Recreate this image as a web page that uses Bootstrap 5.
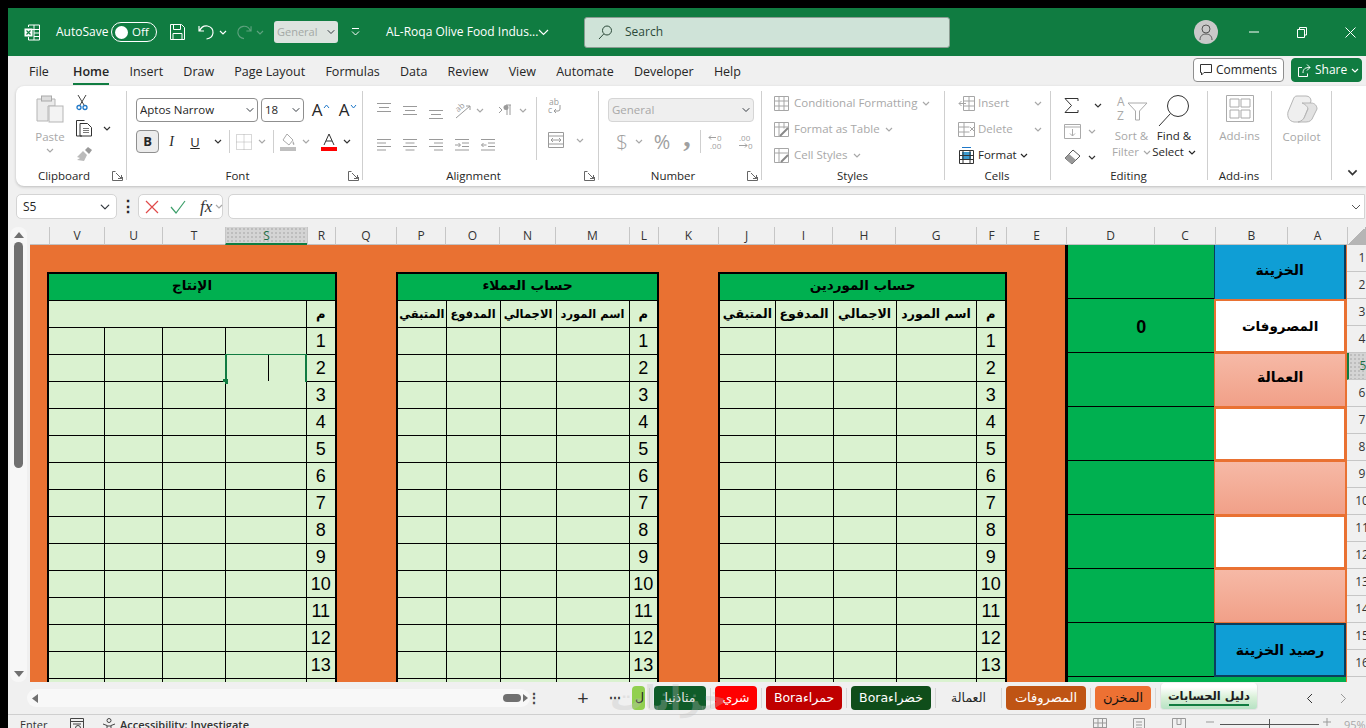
<!DOCTYPE html>
<html lang="en">
<head>
<meta charset="utf-8">
<title>AL-Roqa Olive Food Industries</title>
<link href="https://cdn.jsdelivr.net/npm/bootstrap@5.3.0/dist/css/bootstrap.min.css" rel="stylesheet">
<style>
html,body{height:100%;overflow:hidden}
body{margin:0;background:#000;font-family:"Open Sans","Liberation Sans",sans-serif;font-size:12px;color:#262626;line-height:16px}
.xapp{margin:8px 0 0 8px;height:720px;background:#f0f0f0;display:flex;flex-direction:column;overflow:hidden;position:relative}
svg{display:block;flex:none;overflow:visible}
.cv{width:8px;height:5px}
.dis{color:#a8a8a8}
/* title bar */
.xtitle{height:48px;background:#107c41;color:#fff;flex:none}
.xtitle select.form-select{width:64px;height:22px;padding:0 14px 0 3px;font-size:11px;color:#a3a8a5;background-color:#dde3df;border:0;border-radius:3px;background-size:8px;background-position:right 3px center;margin-left:10px}
.xtoggle{width:46px;height:20px;border:1px solid #fff;border-radius:10px;padding-left:3px;gap:4px;font-size:11.5px;margin-left:7px}
.xknob{width:13px;height:13px;border-radius:50%;background:#fff}
.xsearch{width:366px;height:31px;margin-left:35px;background:#cfe3d8;border:1px solid #8b9c92;border-radius:3px;color:#2d4a3a;padding-left:13px;gap:13px;font-size:12px}
.xavatar{width:24px;height:24px;border-radius:50%;background:#c9c9c9;margin-left:244px}
.xts1{margin-left:16px}.xts2{margin-left:16px;width:48px}.xts3{margin-left:13px}.xts4{margin-left:13px}.xts5{margin-left:4px}.xts6{margin-left:9px}.xts7{margin-left:4px}.xts8{margin-left:13px}.xts9{margin-left:26px;width:147px;font-size:12px;white-space:nowrap}.xts10{margin-left:5px}.xts11{margin-left:31px}.xts12{margin-left:38px}.xts13{margin-left:38px}
/* ribbon tabs */
.xtabs{height:28px;flex:none;padding-left:11px;position:relative}
.xtabs .nav-link{padding:0 10.1px;line-height:31px;height:28px;color:#262626;font-size:12.5px;border:0;position:relative}
.xtabs .nav-item:first-child{margin-right:4px}
.xtabs .nav-link.active{font-weight:600}
.xtabs .nav-link.active::after{content:"";position:absolute;left:10px;right:10px;bottom:-1px;height:2px;background:#107c41}
.xbtnc,.xbtns{height:24px;padding:0 6px;font-size:12px;line-height:20px;border-radius:4px;display:flex;align-items:center;gap:4px}
.xbtnc{width:91px;background:#fff;border:1px solid #8f8f8f;color:#262626;margin-left:auto}
.xbtns{width:71px;background:#107c41;border:1px solid #107c41;color:#fff;margin-left:7px;margin-right:4px}
/* ribbon */
.xribbon{height:100px;flex:none;margin:2px 0 0 8px;background:#fff;border-radius:8px 0 0 8px;box-shadow:0 1px 3px rgba(0,0,0,.22);padding-top:5px}
.rg{height:89px;flex:none;border-right:1px solid #cfcfcf}
.rgb{height:77px}
.rgbt{padding-top:7px}
.rgl{height:16px;display:flex;align-items:center;padding-right:1px;color:#262626;font-size:11.5px}
.rgl span{flex:1;text-align:center}
.rgl svg{width:13px;height:10px}
.w111{width:111px}.w236{width:236px}.w163{width:163px}.w183{width:183px}.w106{width:106px}.w157{width:157px}.w64{width:64px}.w60{width:60px}
.xlabel{font-size:11.5px;line-height:16px;white-space:nowrap}
.xpaste{margin-left:19px;width:30px;padding-top:4px}
.xpaste .xlabel{margin-top:6px}
.xpaste .cv{margin-top:3px}
.xclip2{margin-left:11px;padding-top:3px;gap:9px}
.rsel.form-select{height:24px;font-size:11.5px;padding:0 14px 0 3px;border:1px solid #8f8f8f;border-radius:4px;color:#262626;background-size:8px;background-position:right 3px center}
.s122{width:122px}.s43{width:43px;margin-left:3px}
.xbig{font-size:17px;line-height:20px;width:12px;text-align:center}
.xgrow{margin-left:7px}.xshrink{margin-left:8px}
.xcaret{margin-top:-8px}
.xfr2{margin-top:8px;height:23px}
.xfr1{padding-left:9px}
.xfr2{padding-left:9px}
.xb{width:23px;height:23px;background:#ececec;border:1px solid #8f8f8f;border-radius:4px;font-weight:700;font-size:13px;line-height:21px;text-align:center;padding:0}
.xi{margin-left:6px;width:13px;font-style:italic;text-align:center;font-size:14px;font-family:"Liberation Serif",serif}
.xu{margin-left:9px;width:16px;text-align:center;font-size:13px;text-decoration:underline}
.xvs{width:1px;height:23px;background:#cfcfcf}
.m3{margin-left:3px}.m6{margin-left:6px}.m7{margin-left:7px}.m8{margin-left:8px}.m11{margin-left:11px}.m12{margin-left:12px}.m14{margin-left:14px}.m4{margin-left:4px}.m5{margin-left:5px}.m10{margin-left:10px}.m13{margin-left:13px}.m17{margin-left:17px}.m9{margin-left:9px}.m16{margin-left:16px}.m22{margin-left:22px}.m20{margin-left:20px}
.xal{padding:6px 0 0 14px}
.xal1{width:160px;height:63px;border-right:1px solid #cfcfcf}
.xal1r{height:26px}
.xal1r+.xal1r{margin-top:9px}
.xal2{padding-left:11px;gap:15px}
.rsel.xns{width:146px;background-color:#efefef;border-color:#d5d5d5;color:#a8a8a8;margin-left:9px}
.xnr2{margin-top:8px;height:23px;padding-left:17px}
.xdollar{font-size:21px;width:9px;text-align:center;color:#a0a0a0;font-weight:300}
.xpct{font-size:20px;width:22px;text-align:center;color:#a0a0a0}
.xcom{font-size:30px;font-weight:700;width:10px;text-align:center;color:#a0a0a0;line-height:18px;font-family:"Liberation Serif",serif;margin-top:-12px}
.xst{padding-left:12px;font-size:11.5px;white-space:nowrap;margin-top:-1px;height:78px}
.xst>div{height:26px;gap:5px}
.xinkw{width:50px}
.xced{padding-left:13px}
.xced>div{gap:3px}
.xinkw{margin-right:3px}
.xed1{width:46px;padding-top:1px}
.xed1>div{height:26px;gap:7px}
.xed2{width:43px;text-align:center;padding-top:4px}
.xed3{width:42px;text-align:center;padding-top:4px}
.xed2 .xlabel:first-of-type{margin-top:7px}
.xed3 .xlabel:first-of-type{margin-top:1px}
.xcen{text-align:center;padding-top:4px}
.xcen svg{margin:0 auto}
.xcen .xlabel{margin-top:6px}
.xcoll{flex:1;padding:78px 0 0 15px}
.xcoll .cv{width:11px;height:7px}
/* formula */
.xform{height:26px;flex:none;margin:8px 0 0 8px}
.xname.form-select{width:101px;height:25px;border:1px solid #d4d4d4;border-radius:5px;padding:0 0 0 6px;font-size:12px;background-size:10px;background-position:right 6px center;color:#262626}
.xdots{width:21px;text-align:center;font-weight:700;line-height:14px;font-size:16px;padding-top:5px}
.xfb{width:85px;height:25px;background:#fff;border:1px solid #d4d4d4;border-radius:5px;padding-left:6px}
.xfx{font-family:"Liberation Serif",serif;font-style:italic;font-size:17px;margin-left:14px;color:#333}
.xinput.form-control{height:25px;margin-left:5px;flex:1;border:1px solid #d4d4d4;border-radius:5px 0 0 5px;padding:0}
.xendcv{margin-left:-14px;margin-right:5px;margin-top:10px;color:#555}
/* sheet */
.xsheetw{height:455px;margin-top:7px;flex:none;position:relative}
.xvs-bar{width:22px;flex:none;padding:0 3px 0 2px}
.xvtrack{background:#f7f7f7;border-radius:8px;height:100%;align-items:center;padding:5px 0}
.xvthumb{width:9px;height:226px;background:#707070;border-radius:5px;margin-top:4px;margin-bottom:auto}
.xmain{flex:1;overflow:hidden}
.xcols{display:grid;grid-template-columns:19px 55px 58px 63px 82px 28px 61px 49px 54px 56px 74px 29px 60px 56px 58px 63px 81px 30px 60px 88px 61px 72px 60px 19px;height:18px;font-size:12px;color:#333;line-height:18px;text-align:center;border-bottom:1px solid #c2c2c2}
.xcols>div{border-left:1px solid #c6c6c6;overflow:hidden}
.xcols>div:first-child{border-left:0}
.xcols .xsel{background:#d4d4d4 radial-gradient(#bdbdbd 1px,transparent 1px) 0 0/4px 4px;color:#1f6f47;border-bottom:2px solid #107c41;height:18px}
.xcorner{background:linear-gradient(135deg,transparent 50%,#b5b5b5 50%)}
.xbody{height:437px;overflow:hidden}
.xorange{width:1317px;height:437px;background:#e97132;overflow:hidden;padding:27px 0 0 17px;flex:none}
.xrows{width:19px;overflow:hidden;flex:none}
.xrows div{width:30px;height:27px;line-height:26px;text-align:center;border-bottom:1px solid #c6c6c6;font-size:12px;color:#333}
.xrows .xrsel{background:#d4d4d4 radial-gradient(#bdbdbd 1px,transparent 1px) 0 0/4px 4px;color:#1f6f47;border-left:2px solid #107c41}
.table.xtb{--bs-table-bg:#daf2d0;--bs-table-color:#000;--bs-border-color:#000;table-layout:fixed;margin:0;border-collapse:collapse;border:2px solid #000;flex:none;color:#000}
.xtb td,.xtb th{padding:0;height:27px;border:1px solid #000;text-align:center;vertical-align:middle;font-family:"Liberation Sans",sans-serif;font-size:18px;line-height:20px;font-weight:400;position:relative}
.xtb .xar{font-family:"DejaVu Sans",sans-serif;font-weight:700;font-size:11.5px;white-space:nowrap;overflow:hidden}
.t3 .xar{font-size:12.5px}
.xtb .xttl{background:#00b050;--bs-table-bg:#00b050;font-size:13.5px;padding-bottom:3px}
.xtb td.xtm{font-family:"DejaVu Sans",sans-serif;font-weight:700;font-size:13px}
.t1{width:288px}.t2{width:261px;margin-left:59px!important}.t3{width:287px;margin-left:59px!important}
.c29{width:29px}.c30{width:30px}.c49{width:49px}.c54{width:54px}.c56{width:56px}.c58{width:58px}.c63{width:63px}.c73{width:73px}.c80{width:80px}.c81{width:81px}
.xcellsel{position:absolute;left:-1px;right:-1px;top:-1px;height:28px;border:2px solid #107c41;border-top-width:1px;border-bottom:0}
.xcaretbar{position:absolute;left:41px;top:0;width:1px;height:26px;background:#000}
.xhandle{position:absolute;left:-4px;top:24px;width:5px;height:5px;background:#107c41}
.xside{margin-top:-27px;margin-left:58px;width:281px;flex:none}
.xsr{height:54px}
.xsl{width:149px;background:#00b050;border-left:3px solid #000;border-bottom:1px solid #000;font:700 18px/56px "Liberation Sans",sans-serif;text-align:center;color:#000}
.xsc{width:132px;font:700 14px/50px "DejaVu Sans",sans-serif;text-align:center;color:#000;white-space:nowrap}
.xsblue{background:#0f9ed5;border-left:1px solid #0b3d5c;border-right:2px solid #0b3d5c}
.xsblue2{background:#0f9ed5;border:2px solid #0b3d5c}
.xswhite{background:#fff;border:2px solid #e97132;font-size:13.5px}
.xspink{background:linear-gradient(#f6b9a6,#f1a088);border:1px solid #e97132;line-height:46px}
.xsgreen{height:5px;background:#00b050;border-left:3px solid #000}
/* sheet tabs */
.xbar{height:32px;flex:none;background:#f0f0f0;position:relative}
.xhs{margin-left:19px;width:503px;height:18px;background:#f8f8f8;border-radius:9px;padding:0 0 0 5px;flex:none}
.xhthumb{margin-left:auto;width:18px;height:8px;background:#707070;border-radius:4px}
.xharr{margin:0 2px 0 2px}
.xdotsh{margin-left:-3px;width:10px;text-align:center;font-weight:700;font-size:14px;line-height:12px;color:#444;flex:none}
.xplus{margin-left:37px;width:18px;text-align:center;font-size:20px;line-height:18px;color:#333;flex:none}
.xmore{margin-left:17px;width:12px;font-weight:700;text-align:center;color:#333;line-height:10px;flex:none}
.xt{height:24px;border-radius:4px;font:12.5px/24px "DejaVu Sans",sans-serif;text-align:center;white-space:nowrap;overflow:hidden;flex:none}
.xsep2{width:1px;height:20px;background:#d6d6d6;margin:0 4px;flex:none}
.xtabsrow{margin-left:11px}
.xt1{width:13px;background:#92d050;color:#222;text-align:left;padding-left:3px}
.xt2{width:52px;background:#0f5c29;color:#e6e6e6}
.xt3{width:42px;background:#ff0000;color:#fff}
.xt4{width:76px;background:#c00000;color:#fff}
.xt5{width:80px;background:#0f4d1a;color:#fff}
.xt6{width:57px;color:#262626}
.xt7{width:80px;background:#bf5414;color:#fff;font-size:13px}
.xt8{width:56px;background:#ed7133;color:#111;font-size:13px}
.xt9{width:98px;background:linear-gradient(#fff 15%,#d9f0d8 55%,#b7e2c4);font-weight:700;color:#1d1d1d;border-radius:4px;position:relative;height:27px;margin-top:-3px;line-height:26px;border:1px solid #e3e3e3;border-top:0;font-size:11.5px}
.xt9::after{content:"";position:absolute;left:8px;right:8px;bottom:3px;height:2px;background:#107c41}
.xnav1{margin-left:48px}.xnav2{margin-left:27px}
.xmark{position:absolute;left:602px;top:-6px;font:700 34px/44px "DejaVu Sans",sans-serif;color:rgba(190,190,190,.32);pointer-events:none;white-space:nowrap}
/* status */
.xstatus{height:14px;flex:none;border-top:1px solid #cfcfcf;font-size:11px;line-height:19px;overflow:hidden;color:#333;padding-left:12px}
.xstatus b{font-weight:600}
.xs1{width:27px;flex:none}.xs2{margin-left:23px}.xs3{margin-left:18px}.xs4{margin-left:4px;width:973px;white-space:nowrap;flex:none}.xs5{margin-left:25px}.xs6{margin-left:26px}.xs8{margin-left:20px}
.xzoom{margin:4px 0 0 6px;width:99px;height:6px;border-bottom:1px solid #555;position:relative;flex:none}
.xzoom::after{content:"";position:absolute;left:49px;top:0;width:1px;height:10px;background:#555}
.xs9{margin-left:4px}
.xs7{margin-left:13px;width:22px;color:#a8a8a8;flex:none}
.xsvgpad{margin-top:3px}
</style>
</head>
<body>
<svg width="0" height="0" class="position-absolute"><symbol id="cv" viewBox="0 0 8 5"><path d="M1 1l3 3 3-3" fill="none" stroke="currentColor" stroke-width="1.2"/></symbol>
<symbol id="lau" viewBox="0 0 13 10"><path d="M3.500 0.500H.5v9h10V6M4 2l5.500 5.500M9.500 4v3.500H6" fill="none" stroke="#666"/></symbol>
<symbol id="tblg" viewBox="0 0 15 15"><path d="M.5.500h14v14H.5zM.5 5h14M.5 10h14M5 .5v14M10 .5v14" fill="none" stroke="#a6a6a6"/></symbol>
</svg>
<div class="xapp">

<!-- title bar -->
<div class="xtitle d-flex align-items-center">
  <svg class="xts1" width="16" height="17" viewBox="0 0 16 17"><path d="M4.500 3V1h11v15h-11v-3M10 1v15M4.500 5.500h11M10 9h5.500M10 12.500h5.500" fill="none" stroke="#fff"/><rect x=".5" y="4.500" width="8" height="8" fill="#fff"/><path d="M2.500 6.500l4 4M6.500 6.500l-4 4" stroke="#107c41" stroke-width="1.100"/></svg>
  <div class="xts2">AutoSave</div>
  <div class="xtoggle d-flex align-items-center"><span class="xknob"></span><span>Off</span></div>
  <svg class="xts3" width="15" height="16" viewBox="0 0 15 16"><path d="M.5.500h11l3 3v12H.5zM3.500.5v5h7v-5M3 15.500v-6h9v6" fill="none" stroke="#fff"/></svg>
  <svg class="xts4" width="17" height="16" viewBox="0 0 17 16"><path d="M1 2v5h5M1.500 7C3 3.500 6 1.500 9.500 2c3.500.6 6 3.500 5.500 7-.4 3-3 5.500-6.500 6" fill="none" stroke="#fff" stroke-width="1.200"/></svg>
  <svg class="cv xts5" style="color:#fff"><use href="#cv"/></svg>
  <svg class="xts6" width="16" height="16" viewBox="0 0 17 16"><path d="M16 2v5h-5M15.500 7C14 3.500 11 1.500 7.500 2 4 2.600 1.500 5.500 2 9c.4 3 3 5.500 6.500 6" fill="none" stroke="#5fa27f" stroke-width="1.200"/></svg>
  <svg class="cv xts7" style="color:#5fa27f"><use href="#cv"/></svg>
  <select class="form-select" aria-label="Style"><option>General</option></select>
  <svg class="xts8" width="9" height="8" viewBox="0 0 9 8"><path d="M1 .5h7M1 3.500l3.500 3.500L8 3.500" fill="none" stroke="#fff"/></svg>
  <div class="xts9">AL-Roqa Olive Food Indus...</div>
  <svg class="xts10" width="11" height="7" viewBox="0 0 11 7"><path d="M1 1l4.500 4.500L10 1" fill="none" stroke="#fff" stroke-width="1.200"/></svg>
  <div class="xsearch d-flex align-items-center">
    <svg width="14" height="15" viewBox="0 0 14 15"><circle cx="9" cy="5.500" r="4.500" fill="none" stroke="#2d4a3a"/><path d="M5.700 9L1 14" stroke="#2d4a3a"/></svg>
    <span>Search</span>
  </div>
  <div class="xavatar d-flex align-items-center justify-content-center"><svg width="14" height="17" viewBox="0 0 14 17"><circle cx="7" cy="5" r="4" fill="none" stroke="#555"/><path d="M1 16c0-4 2.500-6 6-6s6 2 6 6" fill="none" stroke="#555"/></svg></div>
  <svg class="xts11" width="10" height="2" viewBox="0 0 10 2"><path d="M0 1h10" stroke="#fff"/></svg>
  <svg class="xts12" width="10" height="11" viewBox="0 0 10 11"><path d="M.5 2.500h7v8h-7zM2.500 2.500V.5h7v7.500h-2" fill="none" stroke="#fff"/></svg>
  <svg class="xts13" width="11" height="11" viewBox="0 0 11 11"><path d="M.5.500l10 10M10.500.5l-10 10" stroke="#fff"/></svg>
</div>

<!-- ribbon tabs -->
<div class="xtabs d-flex align-items-center">
  <ul class="nav flex-nowrap">
    <li class="nav-item"><a class="nav-link" href="#">File</a></li>
    <li class="nav-item"><a class="nav-link active" href="#">Home</a></li>
    <li class="nav-item"><a class="nav-link" href="#">Insert</a></li>
    <li class="nav-item"><a class="nav-link" href="#">Draw</a></li>
    <li class="nav-item"><a class="nav-link" href="#">Page Layout</a></li>
    <li class="nav-item"><a class="nav-link" href="#">Formulas</a></li>
    <li class="nav-item"><a class="nav-link" href="#">Data</a></li>
    <li class="nav-item"><a class="nav-link" href="#">Review</a></li>
    <li class="nav-item"><a class="nav-link" href="#">View</a></li>
    <li class="nav-item"><a class="nav-link" href="#">Automate</a></li>
    <li class="nav-item"><a class="nav-link" href="#">Developer</a></li>
    <li class="nav-item"><a class="nav-link" href="#">Help</a></li>
  </ul>
  <button class="btn xbtnc" type="button"><svg width="12" height="12" viewBox="0 0 12 12"><path d="M.5.500h11v8H4L1.500 11V8.500h-1z" fill="none" stroke="#333"/></svg>Comments</button>
  <button class="btn xbtns" type="button"><svg width="13" height="13" viewBox="0 0 13 13"><path d="M4 3.500H.5v9h9v-3M5 9c0-4 2-5.500 7-5.500M9 .5l3 3-3 3" fill="none" stroke="#fff"/></svg>Share<svg class="cv" style="color:#fff"><use href="#cv"/></svg></button>
</div>

<!-- ribbon -->
<div class="xribbon d-flex">
  <div class="rg w111">
    <div class="rgb d-flex">
      <div class="xpaste d-flex flex-column align-items-center dis">
        <svg width="28" height="28" viewBox="0 0 28 28"><path d="M1 4h6l1-2h4l1 2h6v7h-7v15H1z" fill="#ebebeb" stroke="#b5b5b5"/><rect x="5.500" y="1" width="10" height="5" fill="#ddd" stroke="#aaa"/><rect x="13" y="11" width="14" height="16" fill="#f3f3f3" stroke="#b5b5b5"/></svg>
        <div class="xlabel">Paste</div>
        <svg class="cv"><use href="#cv"/></svg>
      </div>
      <div class="xclip2 d-flex flex-column">
        <svg width="12" height="17" viewBox="0 0 12 17"><path d="M2 1l6 10M10 1L4 11" stroke="#444" fill="none"/><circle cx="3" cy="13.500" r="2" fill="none" stroke="#1f78c8" stroke-width="1.300"/><circle cx="9" cy="13.500" r="2" fill="none" stroke="#1f78c8" stroke-width="1.300"/></svg>
        <div class="d-flex align-items-center">
          <svg width="18" height="17" viewBox="0 0 18 17"><path d="M6 16H.5V.5h8M4 16V3.500h7.500l4 4V16z" fill="none" stroke="#333"/><path d="M7 8.500h6M7 10.500h6M7 12.500h6" stroke="#777"/></svg>
          <svg class="cv m9" style="color:#333"><use href="#cv"/></svg>
        </div>
        <svg width="17" height="16" viewBox="0 0 17 16"><path d="M7 5l4 4-3 6-7-1 3-2-3-1z" fill="#bbb"/><path d="M9 4l3-3 4 3-3 4z" fill="#999"/></svg>
      </div>
    </div>
    <div class="rgl"><span>Clipboard</span><svg><use href="#lau"/></svg></div>
  </div>

  <div class="rg w236">
    <div class="rgb rgbt">
      <div class="xfr1 d-flex align-items-center">
        <select class="form-select rsel s122" aria-label="Font"><option>Aptos Narrow</option></select>
        <select class="form-select rsel s43" aria-label="Size"><option>18</option></select>
        <span class="xbig xgrow">A</span><svg class="xcaret" width="7" height="5" viewBox="0 0 7 5"><path d="M1 4l2.500-3L6 4" fill="none" stroke="#1f78c8"/></svg>
        <span class="xbig xshrink">A</span><svg class="xcaret" width="7" height="5" viewBox="0 0 7 5"><path d="M1 1l2.500 3L6 1" fill="none" stroke="#1f78c8"/></svg>
      </div>
      <div class="xfr2 d-flex align-items-center">
        <div class="xb">B</div>
        <div class="xi">I</div>
        <div class="xu">U</div>
        <svg class="cv m11" style="color:#333"><use href="#cv"/></svg>
        <div class="xvs m7"></div>
        <svg class="m6" width="16" height="16" viewBox="0 0 16 16"><path d="M.5.500h15v15H.5zM8 .5v15M.5 8h15" fill="none" stroke="#b0b0b0" stroke-dasharray="1 1"/></svg>
        <svg class="cv m6 dis"><use href="#cv"/></svg>
        <div class="xvs m7"></div>
        <svg class="m6" width="16" height="18" viewBox="0 0 16 18"><path d="M7 1l6 6-4 5-6-5z" fill="none" stroke="#aaa"/><path d="M13 8c1 2 2 3 1 4-1 0-2-2-1-4" fill="#aaa"/><rect y="14" width="16" height="4" fill="#bfbfbf"/></svg>
        <svg class="cv m6 dis"><use href="#cv"/></svg>
        <svg class="m11" width="16" height="18" viewBox="0 0 16 18"><path d="M3 12l5-11 5 11M5 8h6" fill="none" stroke="#333"/><rect y="14" width="16" height="4" fill="#ff0000"/></svg>
        <svg class="cv m6" style="color:#333"><use href="#cv"/></svg>
      </div>
    </div>
    <div class="rgl"><span>Font</span><svg><use href="#lau"/></svg></div>
  </div>

  <div class="rg w236">
    <div class="rgb xal d-flex">
      <div class="xal1">
        <div class="xal1r d-flex align-items-center">
          <svg width="14" height="20" viewBox="0 0 14 20"><path d="M0 3.500h14M2 7.500h10M0 11.500h14" stroke="#9a9a9a"/></svg>
          <svg class="m12" width="14" height="20" viewBox="0 0 14 20"><path d="M0 6.500h14M2 10.500h10M0 14.500h14" stroke="#9a9a9a"/></svg>
          <svg class="m12" width="14" height="20" viewBox="0 0 14 20"><path d="M0 10.500h14M2 14.500h10M0 18.500h14" stroke="#9a9a9a"/></svg>
          <svg class="m12" width="17" height="18" viewBox="0 0 17 18"><path d="M1 17L15 5M15 5h-4M15 5v4" fill="none" stroke="#9a9a9a"/><text x="1" y="10" font-size="8" fill="#9a9a9a" transform="rotate(-40 4 8)">ab</text></svg>
          <svg class="cv m4 dis"><use href="#cv"/></svg>
          <svg class="m14" width="14" height="12" viewBox="0 0 14 12"><path d="M1 3l3 3-3 3M8 1h5M9 1v10M12 1v10" fill="none" stroke="#9a9a9a"/><circle cx="8" cy="3.500" r="2.500" fill="#9a9a9a"/></svg>
          <svg class="cv m7 dis"><use href="#cv"/></svg>
        </div>
        <div class="xal1r d-flex align-items-center">
          <svg width="14" height="14" viewBox="0 0 14 14"><path d="M0 1.500h14M0 5h9M0 8.500h14M0 12h9" stroke="#9a9a9a"/></svg>
          <svg class="m12" width="14" height="14" viewBox="0 0 14 14"><path d="M0 1.500h14M2.500 5h9M0 8.500h14M2.500 12h9" stroke="#9a9a9a"/></svg>
          <svg class="m12" width="14" height="14" viewBox="0 0 14 14"><path d="M0 1.500h14M5 5h9M0 8.500h14M5 12h9" stroke="#9a9a9a"/></svg>
          <svg class="m12" width="14" height="14" viewBox="0 0 14 14"><path d="M0 1.500h14M7 5h7M7 8.500h7M0 12h14M0 7h5M3.500 5L5.500 7l-2 2" fill="none" stroke="#9a9a9a"/></svg>
          <svg class="m12" width="14" height="14" viewBox="0 0 14 14"><path d="M0 1.500h14M7 5h7M7 8.500h7M0 12h14M5.500 7H.5M2.500 5L.5 7l2 2" fill="none" stroke="#9a9a9a"/></svg>
        </div>
      </div>
      <div class="xal2 d-flex flex-column">
        <svg width="15" height="20" viewBox="0 0 15 20"><text x="1" y="7.500" font-size="8.500" fill="#9a9a9a">ab</text><text x="0" y="16" font-size="8.500" fill="#9a9a9a">c</text><path d="M12 8v4a2 2 0 0 1-2 2H6M8 12l-2 2 2 2" fill="none" stroke="#9a9a9a"/></svg>
        <div class="d-flex align-items-center">
          <svg width="16" height="16" viewBox="0 0 16 16"><path d="M.5.500h15v15H.5zM.5 4h15M.5 12h15M3 8h10M3 8l2-2M3 8l2 2M13 8l-2-2M13 8l-2 2" fill="none" stroke="#9a9a9a"/></svg>
          <svg class="cv m12 dis"><use href="#cv"/></svg>
        </div>
      </div>
    </div>
    <div class="rgl"><span>Alignment</span><svg><use href="#lau"/></svg></div>
  </div>

  <div class="rg w163">
    <div class="rgb rgbt">
      <select class="form-select rsel xns" aria-label="Number format" disabled><option>General</option></select>
      <div class="xnr2 d-flex align-items-center">
        <span class="xdollar">$</span>
        <svg class="cv m10 dis"><use href="#cv"/></svg>
        <span class="xpct m8">%</span>
        <span class="xcom m9">,</span>
        <div class="xvs m8"></div>
        <svg class="m7" width="17" height="18" viewBox="0 0 17 18"><text x="9" y="7.500" font-size="8" fill="#a0a0a0">0</text><text x="2" y="16" font-size="8" fill="#a0a0a0">.00</text><path d="M1 4.500h7M3 2.500l-2 2 2 2" fill="none" stroke="#a0a0a0"/></svg>
        <svg class="m12" width="17" height="18" viewBox="0 0 17 18"><text x="2" y="7.500" font-size="8" fill="#a0a0a0">.00</text><text x="11" y="16" font-size="8" fill="#a0a0a0">0</text><path d="M2 12.500h8M8 10.500l2 2-2 2" fill="none" stroke="#a0a0a0"/></svg>
      </div>
    </div>
    <div class="rgl"><span>Number</span><svg><use href="#lau"/></svg></div>
  </div>

  <div class="rg w183">
    <div class="rgb xst dis">
      <div class="d-flex align-items-center"><svg width="15" height="15"><use href="#tblg"/></svg><span>Conditional Formatting</span><svg class="cv"><use href="#cv"/></svg></div>
      <div class="d-flex align-items-center"><svg width="15" height="15" viewBox="0 0 15 15"><path d="M.5.500h14v14H.5zM.5 5h14M5 .5v14M10 .5v6" fill="none" stroke="#a6a6a6"/><path d="M6 14l8-8" stroke="#888" stroke-width="2"/></svg><span>Format as Table</span><svg class="cv"><use href="#cv"/></svg></div>
      <div class="d-flex align-items-center"><svg width="15" height="15" viewBox="0 0 15 15"><path d="M.5.500h14v14H.5zM.5 5h14M5 .5v14" fill="none" stroke="#a6a6a6"/><path d="M7 14l7-7" stroke="#888" stroke-width="2"/></svg><span>Cell Styles</span><svg class="cv"><use href="#cv"/></svg></div>
    </div>
    <div class="rgl"><span>Styles</span></div>
  </div>

  <div class="rg w106">
    <div class="rgb xst xced">
      <div class="d-flex align-items-center dis"><svg width="17" height="15" viewBox="0 0 17 15"><path d="M5.500.5h11v14h-11zM5.500 5h11M5.500 10h11M11 .5v14" fill="none" stroke="#a6a6a6"/><path d="M8 7.500H1M3.500 5L1 7.500 3.500 10" fill="none" stroke="#a6a6a6"/></svg><span class="xinkw">Insert</span><svg class="cv"><use href="#cv"/></svg></div>
      <div class="d-flex align-items-center dis"><svg width="17" height="15" viewBox="0 0 17 15"><path d="M.5.500h16v14H.5zM.5 5h11M.5 10h11M6 .5v14" fill="none" stroke="#a6a6a6"/><path d="M12 5l4 4M16 5l-4 4" stroke="#a6a6a6"/></svg><span class="xinkw">Delete</span><svg class="cv"><use href="#cv"/></svg></div>
      <div class="d-flex align-items-center"><svg width="17" height="17" viewBox="0 0 17 17"><rect x="4" y="5" width="9" height="7" fill="#3a9bd1"/><path d="M1.500 3.500h14v13h-14zM1.500 8.500h14M1.500 12.500h14M5 3.500v13M12 3.500v13" fill="none" stroke="#333"/><path d="M4 .5h9" stroke="#1f78c8"/></svg><span>Format</span><svg class="cv"><use href="#cv"/></svg></div>
    </div>
    <div class="rgl"><span>Cells</span></div>
  </div>

  <div class="rg w157">
    <div class="rgb d-flex">
      <div class="xed1 m13">
        <div class="d-flex align-items-center"><svg width="15" height="15" viewBox="0 0 15 15"><path d="M14 3V.5H1l6.500 7L1 14.500h13V12" fill="none" stroke="#333"/></svg><svg class="cv m8" style="color:#333"><use href="#cv"/></svg></div>
        <div class="d-flex align-items-center"><svg width="17" height="15" viewBox="0 0 17 15"><path d="M.5.500h16v14H.5zM.5 3h16" fill="none" stroke="#aaa"/><path d="M8.500 5v7M6 9.500l2.500 2.500L11 9.500" fill="none" stroke="#aaa"/></svg><svg class="cv dis"><use href="#cv"/></svg></div>
        <div class="d-flex align-items-center"><svg width="17" height="16" viewBox="0 0 17 16"><path d="M1 9l8-8 7 6-8 8z" fill="none" stroke="#555"/><path d="M1 9l4-4 7 6-4 4z" fill="#999"/></svg><svg class="cv" style="color:#333"><use href="#cv"/></svg></div>
      </div>
      <div class="xed2 dis d-flex flex-column align-items-center">
        <svg width="32" height="26" viewBox="0 0 32 26"><text x="1" y="11" font-size="12" fill="#aaa">A</text><text x="1" y="25" font-size="12" fill="#aaa">Z</text><path d="M12 8h19l-7.500 8v9h-4v-9z" fill="none" stroke="#aaa"/></svg>
        <div class="xlabel">Sort &amp;</div>
        <div class="xlabel d-flex align-items-center gap-1">Filter<svg class="cv"><use href="#cv"/></svg></div>
      </div>
      <div class="xed3 d-flex flex-column align-items-center">
        <svg width="32" height="32" viewBox="0 0 32 32"><circle cx="20" cy="11" r="10.500" fill="none" stroke="#333"/><path d="M12.500 18.500L1 31" stroke="#333"/></svg>
        <div class="xlabel">Find &amp;</div>
        <div class="xlabel d-flex align-items-center gap-1">Select<svg class="cv"><use href="#cv"/></svg></div>
      </div>
    </div>
    <div class="rgl"><span>Editing</span></div>
  </div>

  <div class="rg w64">
    <div class="rgb xcen dis">
      <svg width="28" height="27" viewBox="0 0 28 27"><path d="M.5.500h27v26H.5zM4 4h9v8H4zM15 4h9v8h-9zM4 15h9v8H4zM15 15h9v8h-9z" fill="none" stroke="#aaa"/></svg>
      <div class="xlabel">Add-ins</div>
    </div>
    <div class="rgl"><span>Add-ins</span></div>
  </div>

  <div class="rg w60">
    <div class="rgb xcen dis">
      <svg width="32" height="28" viewBox="0 0 32 28"><path d="M11 1h9c3 0 5 2 5 5l-7 17c-1 3-3 4-6 4H8c-5-1-7-5-6-10L7 5c1-3 2-4 4-4z" fill="#efefef" stroke="#b5b5b5"/><path d="M16 8h9c4 0 6 3 6 6l-4 8c-1 3-3 5-7 5h-8c4-1 6-3 7-6l3-7c0-2-3-5-6-6z" fill="#e2e2e2" stroke="#b5b5b5"/></svg>
      <div class="xlabel">Copilot</div>
    </div>
    <div class="rgl">&nbsp;</div>
  </div>
  <div class="xcoll"><svg class="cv" style="color:#333"><use href="#cv"/></svg></div>
</div>

<!-- formula bar -->
<div class="xform d-flex align-items-start">
  <select class="form-select xname" aria-label="Name box"><option>S5</option></select>
  <div class="xdots">&#8942;</div>
  <div class="xfb d-flex align-items-center">
    <svg width="14" height="14" viewBox="0 0 14 14"><path d="M1 1l12 12M13 1L1 13" stroke="#e04a4a" stroke-width="1.200"/></svg>
    <svg class="m11" width="16" height="14" viewBox="0 0 16 14"><path d="M1 7l5 6L15 1" fill="none" stroke="#3fa06c" stroke-width="1.200"/></svg>
    <span class="xfx">fx</span>
    <svg class="cv m3 dis"><use href="#cv"/></svg>
  </div>
  <input class="form-control xinput" type="text" aria-label="Formula">
  <svg class="xendcv" width="10" height="6" viewBox="0 0 10 6"><path d="M1 1l4 4 4-4" fill="none" stroke="currentColor"/></svg>
</div>

<!-- sheet -->
<div class="xsheetw d-flex">
  <div class="xvs-bar">
    <div class="xvtrack d-flex flex-column">
      <svg width="10" height="6" viewBox="0 0 10 6"><path d="M5 0l5 6H0z" fill="#707070"/></svg>
      <div class="xvthumb"></div>
      <svg width="10" height="6" viewBox="0 0 10 6"><path d="M5 6l5-6H0z" fill="#707070"/></svg>
    </div>
  </div>
  <div class="xmain">
    <div class="xcols">
      <div></div><div>V</div><div>U</div><div>T</div><div class="xsel">S</div><div>R</div><div>Q</div><div>P</div><div>O</div><div>N</div><div>M</div><div>L</div><div>K</div><div>J</div><div>I</div><div>H</div><div>G</div><div>F</div><div>E</div><div>D</div><div>C</div><div>B</div><div>A</div><div class="xcorner"></div>
    </div>
    <div class="xbody d-flex">
      <div class="xorange d-flex align-items-start">
        <table class="table table-bordered xtb t1">
          <colgroup><col class="c56"><col class="c58"><col class="c63"><col class="c81"><col class="c30"></colgroup>
          <tbody>
          <tr><td colspan="5" class="xar xttl" dir="rtl">الإنتاج</td></tr>
          <tr><td colspan="4"></td><td class="xtm">م</td></tr>
          <tr><td></td><td></td><td></td><td></td><td>1</td></tr>
          <tr><td></td><td></td><td></td><td rowspan="2"><div class="xcellsel"><div class="xcaretbar"></div><div class="xhandle"></div></div></td><td>2</td></tr>
          <tr><td></td><td></td><td></td><td>3</td></tr>
          <tr><td></td><td></td><td></td><td></td><td>4</td></tr>
          <tr><td></td><td></td><td></td><td></td><td>5</td></tr>
          <tr><td></td><td></td><td></td><td></td><td>6</td></tr>
          <tr><td></td><td></td><td></td><td></td><td>7</td></tr>
          <tr><td></td><td></td><td></td><td></td><td>8</td></tr>
          <tr><td></td><td></td><td></td><td></td><td>9</td></tr>
          <tr><td></td><td></td><td></td><td></td><td>10</td></tr>
          <tr><td></td><td></td><td></td><td></td><td>11</td></tr>
          <tr><td></td><td></td><td></td><td></td><td>12</td></tr>
          <tr><td></td><td></td><td></td><td></td><td>13</td></tr>
          <tr><td></td><td></td><td></td><td></td><td></td></tr>
          </tbody>
        </table>
        <table class="table table-bordered xtb t2">
          <colgroup><col class="c49"><col class="c54"><col class="c56"><col class="c73"><col class="c29"></colgroup>
          <tbody>
          <tr><td colspan="5" class="xar xttl" dir="rtl">حساب العملاء</td></tr>
          <tr><td class="xar" dir="rtl">المتبقي</td><td class="xar" dir="rtl">المدفوع</td><td class="xar" dir="rtl">الاجمالي</td><td class="xar" dir="rtl">اسم المورد</td><td class="xtm">م</td></tr>
          <tr><td></td><td></td><td></td><td></td><td>1</td></tr>
          <tr><td></td><td></td><td></td><td></td><td>2</td></tr>
          <tr><td></td><td></td><td></td><td></td><td>3</td></tr>
          <tr><td></td><td></td><td></td><td></td><td>4</td></tr>
          <tr><td></td><td></td><td></td><td></td><td>5</td></tr>
          <tr><td></td><td></td><td></td><td></td><td>6</td></tr>
          <tr><td></td><td></td><td></td><td></td><td>7</td></tr>
          <tr><td></td><td></td><td></td><td></td><td>8</td></tr>
          <tr><td></td><td></td><td></td><td></td><td>9</td></tr>
          <tr><td></td><td></td><td></td><td></td><td>10</td></tr>
          <tr><td></td><td></td><td></td><td></td><td>11</td></tr>
          <tr><td></td><td></td><td></td><td></td><td>12</td></tr>
          <tr><td></td><td></td><td></td><td></td><td>13</td></tr>
          <tr><td></td><td></td><td></td><td></td><td></td></tr>
          </tbody>
        </table>
        <table class="table table-bordered xtb t3">
          <colgroup><col class="c56"><col class="c58"><col class="c63"><col class="c80"><col class="c30"></colgroup>
          <tbody>
          <tr><td colspan="5" class="xar xttl" dir="rtl">حساب الموردين</td></tr>
          <tr><td class="xar" dir="rtl">المتبقي</td><td class="xar" dir="rtl">المدفوع</td><td class="xar" dir="rtl">الاجمالي</td><td class="xar" dir="rtl">اسم المورد</td><td class="xtm">م</td></tr>
          <tr><td></td><td></td><td></td><td></td><td>1</td></tr>
          <tr><td></td><td></td><td></td><td></td><td>2</td></tr>
          <tr><td></td><td></td><td></td><td></td><td>3</td></tr>
          <tr><td></td><td></td><td></td><td></td><td>4</td></tr>
          <tr><td></td><td></td><td></td><td></td><td>5</td></tr>
          <tr><td></td><td></td><td></td><td></td><td>6</td></tr>
          <tr><td></td><td></td><td></td><td></td><td>7</td></tr>
          <tr><td></td><td></td><td></td><td></td><td>8</td></tr>
          <tr><td></td><td></td><td></td><td></td><td>9</td></tr>
          <tr><td></td><td></td><td></td><td></td><td>10</td></tr>
          <tr><td></td><td></td><td></td><td></td><td>11</td></tr>
          <tr><td></td><td></td><td></td><td></td><td>12</td></tr>
          <tr><td></td><td></td><td></td><td></td><td>13</td></tr>
          <tr><td></td><td></td><td></td><td></td><td></td></tr>
          </tbody>
        </table>
        <div class="xside">
          <div class="xsr d-flex"><div class="xsl"></div><div class="xsc xsblue" dir="rtl">الخزينة</div></div>
          <div class="xsr d-flex"><div class="xsl">0</div><div class="xsc xswhite" dir="rtl">المصروفات</div></div>
          <div class="xsr d-flex"><div class="xsl"></div><div class="xsc xspink" dir="rtl">العمالة</div></div>
          <div class="xsr d-flex"><div class="xsl"></div><div class="xsc xswhite"></div></div>
          <div class="xsr d-flex"><div class="xsl"></div><div class="xsc xspink"></div></div>
          <div class="xsr d-flex"><div class="xsl"></div><div class="xsc xswhite"></div></div>
          <div class="xsr d-flex"><div class="xsl"></div><div class="xsc xspink"></div></div>
          <div class="xsr d-flex"><div class="xsl"></div><div class="xsc xsblue2" dir="rtl">رصيد الخزينة</div></div>
          <div class="xsgreen"></div>
        </div>
      </div>
      <div class="xrows">
        <div>1</div><div>2</div><div>3</div><div>4</div><div class="xrsel">5</div><div>6</div><div>7</div><div>8</div><div>9</div><div>10</div><div>11</div><div>12</div><div>13</div><div>14</div><div>15</div><div>16</div><div></div>
      </div>
    </div>
  </div>
</div>

<!-- sheet tabs -->
<div class="xbar d-flex align-items-center">
  <div class="xhs d-flex align-items-center">
    <svg width="6" height="9" viewBox="0 0 6 9"><path d="M0 4.500L6 0v9z" fill="#707070"/></svg>
    <div class="xhthumb"></div>
    <svg class="xharr" width="5" height="8" viewBox="0 0 5 8"><path d="M5 4L0 0v8z" fill="#707070"/></svg>
  </div>
  <div class="xdotsh">&#8942;</div>
  <div class="xplus">+</div>
  <div class="xmore">&#8943;</div>
  <div class="xtabsrow d-flex align-items-center">
    <div class="xt xt1" dir="rtl">ل</div><span class="xsep2"></span>
    <div class="xt xt2" dir="rtl">مثاذنيا</div><span class="xsep2"></span>
    <div class="xt xt3" dir="rtl">شري</div><span class="xsep2"></span>
    <div class="xt xt4" dir="rtl">حمراءBora</div><span class="xsep2"></span>
    <div class="xt xt5" dir="rtl">خضراءBora</div><span class="xsep2"></span>
    <div class="xt xt6" dir="rtl">العمالة</div><span class="xsep2"></span>
    <div class="xt xt7" dir="rtl">المصروفات</div><span class="xsep2"></span>
    <div class="xt xt8" dir="rtl">المخزن</div><span class="xsep2"></span>
    <div class="xt xt9" dir="rtl">دليل الحسابات</div>
  </div>
  <svg class="xnav1" width="7" height="11" viewBox="0 0 7 11"><path d="M6 1L1.500 5.500 6 10" fill="none" stroke="#333"/></svg>
  <svg class="xnav2" width="7" height="11" viewBox="0 0 7 11"><path d="M1 1l4.500 4.500L1 10" fill="none" stroke="#999"/></svg>
  <div class="xmark" dir="rtl">خزانات</div>
</div>

<!-- status -->
<div class="xstatus d-flex align-items-start">
  <div class="xs1">Enter</div>
  <svg class="xs2 xsvgpad" width="14" height="14" viewBox="0 0 14 14"><path d="M.5.500h13v13H.5zM.5 3.500h13M3 6h8" fill="none" stroke="#444"/><circle cx="8" cy="10" r="2.500" fill="none" stroke="#444"/></svg>
  <svg class="xs3 xsvgpad" width="14" height="14" viewBox="0 0 14 14"><circle cx="7" cy="2.500" r="2" fill="none" stroke="#444"/><path d="M1 6l4 1.500V10l-2 4M13 6L9 7.500V10l2 4M5 8h4" fill="none" stroke="#444"/></svg>
  <div class="xs4"><b>Accessibility: Investigate</b></div>
  <svg class="xsvgpad" width="14" height="14" viewBox="0 0 14 14"><path d="M.5.500h13v13H.5zM.5 5h13M.5 9.500h13M5 .5v13M9.500 .5v13" fill="none" stroke="#999"/></svg>
  <svg class="xs5 xsvgpad" width="14" height="14" viewBox="0 0 14 14"><path d="M1.500.5h11v13h-11zM4 4h6M4 7h6M4 10h6" fill="none" stroke="#999"/></svg>
  <svg class="xs6 xsvgpad" width="14" height="14" viewBox="0 0 14 14"><path d="M.5.500h13v13H.5zM5 .5v6h4v-6" fill="none" stroke="#999"/></svg>
  <svg class="xs8 xsvgpad" width="8" height="8" viewBox="0 0 8 8"><path d="M0 4h8" stroke="#999"/></svg>
  <div class="xzoom"></div>
  <svg class="xs9 xsvgpad" width="8" height="8" viewBox="0 0 8 8"><path d="M0 4h8M4 0v8" stroke="#999"/></svg>
  <div class="xs7">95%</div>
</div>
</div>
</body>
</html>
